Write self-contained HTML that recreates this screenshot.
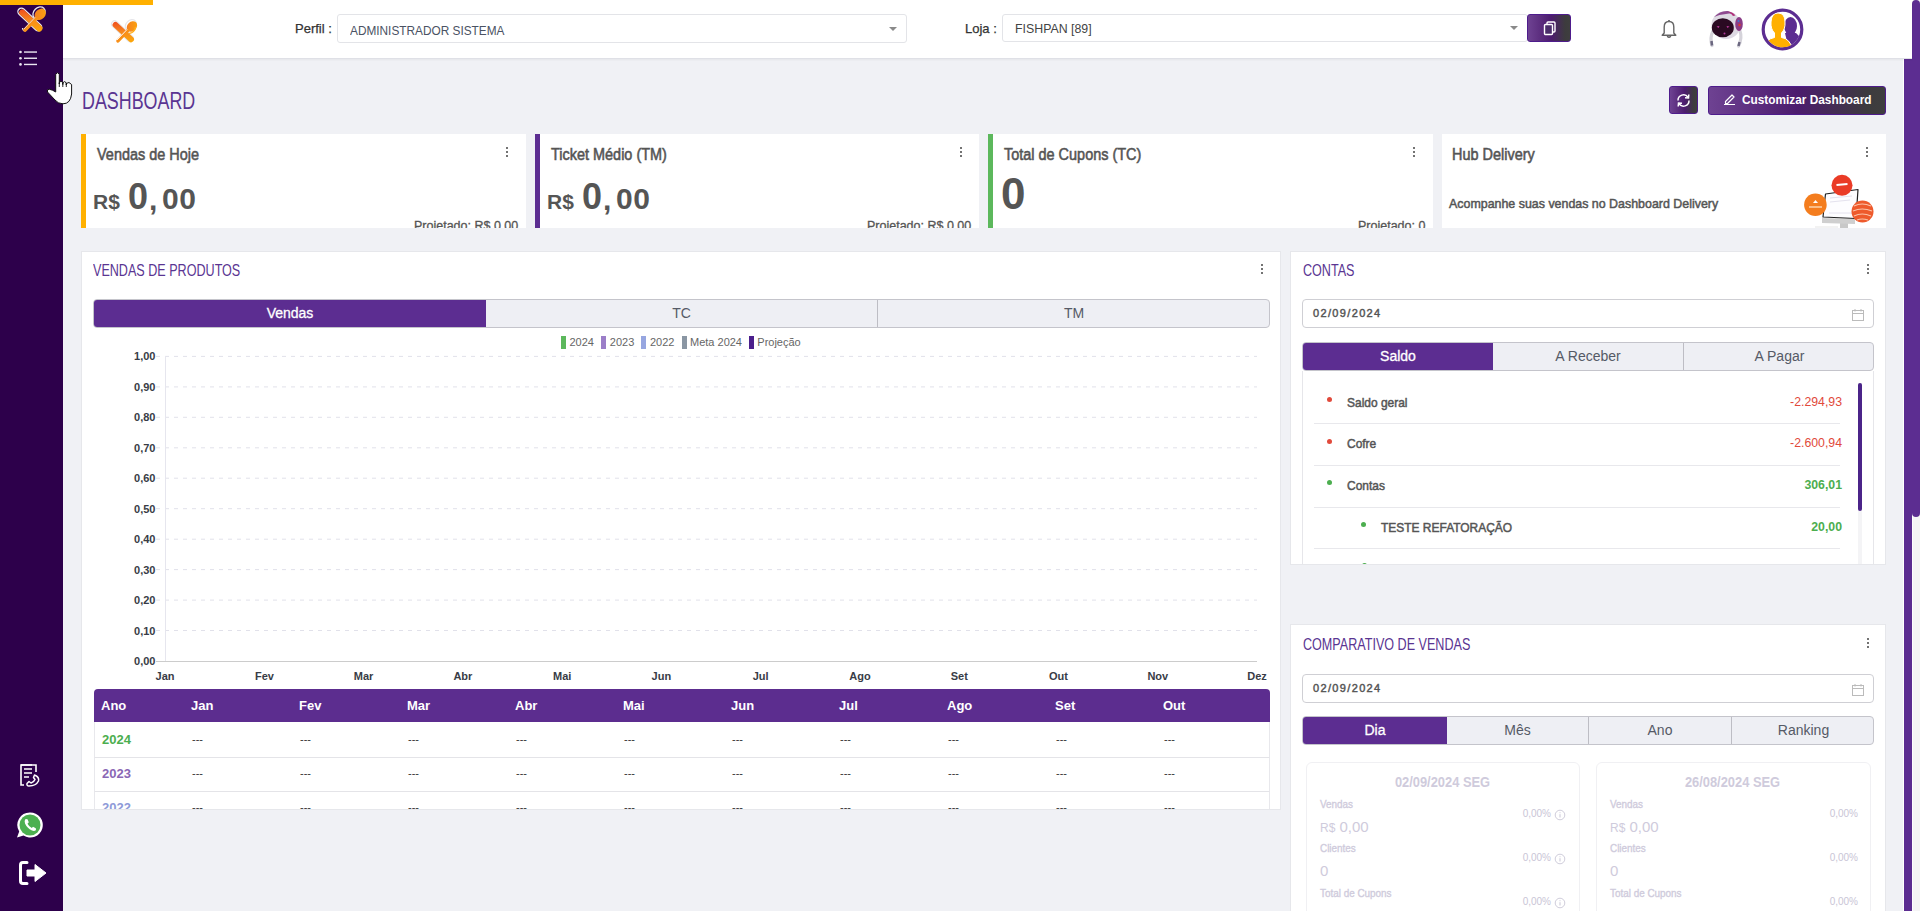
<!DOCTYPE html>
<html><head><meta charset="utf-8">
<style>
*{box-sizing:border-box;margin:0;padding:0}
html,body{width:1920px;height:911px;overflow:hidden}
body{background:#f0f1f5;font-family:"Liberation Sans",sans-serif;position:relative;color:#555}
.a{position:absolute}
.nw{white-space:nowrap}
#side{left:0;top:0;width:63px;height:911px;background:#2d004b}
#topbar{left:0;top:0;width:153px;height:5px;background:#ffb000;z-index:50}
#hdr{left:63px;top:0;width:1849px;height:59px;background:#fff;border-bottom:1px solid #dfe0e6;box-shadow:0 1px 2px rgba(0,0,0,.05);z-index:10}
#rstrip{left:1903px;top:58px;width:9px;height:853px;background:#5c2d91;border-left:1px solid #fff}
#sbtrack{left:1912px;top:0;width:8px;height:911px;background:#f5f5f5;border-left:1px solid #fff}
#sbthumb{left:1912px;top:0;width:8px;height:517px;background:#5c2d91;border-radius:4px}
.sel{background:#fff;border:1px solid #e3e4e8;border-radius:3px}
.caret{width:0;height:0;border-left:4px solid transparent;border-right:4px solid transparent;border-top:4.5px solid #8a8a8a}
.card{background:#fff}
.panel{background:#fff;border:1px solid #e6e7eb}
.dots{width:3px}
.dots i{display:block;width:2px;height:2px;background:#444;border-radius:1px;margin-bottom:2px}
.ttl{color:#5a3592;font-size:17px;line-height:1;transform-origin:0 0;transform:scaleX(.74)}
.tabs{border:1px solid #c4c4cb;border-radius:4px;background:#eeeff4;overflow:hidden}
.tab{position:absolute;top:0;height:100%;display:flex;align-items:center;justify-content:center;font-size:14px;color:#555a66;padding-bottom:1px}
.tab.on{background:#5c2d91;color:#fff;-webkit-text-stroke:.3px #fff}
.ct{font-size:17px;line-height:1;font-weight:normal;-webkit-text-stroke:.6px #555;color:#555;transform-origin:0 0;transform:scaleX(.85)}
.big{color:#555;font-weight:bold;line-height:1}
.rs{font-size:21px}
.b0{font-size:37px}
.b1{font-size:28px}
.c0{font-size:44px;line-height:1;font-weight:bold;color:#555}
.proj{font-size:12.5px;line-height:1;-webkit-text-stroke:.3px #555;color:#555}
.th{top:10px;font-size:13px;font-weight:bold;color:#fff;line-height:1}
.thead{background:#5c2d8f;border-radius:4px 4px 0 0}
.trow{width:1176px;height:35px;border-bottom:1px solid #e4e4e8;border-left:1px solid #e8e8ec;border-right:1px solid #e8e8ec}
.yr{top:11px;font-size:13px;font-weight:bold;line-height:1}
.dash{top:12px;font-size:11px;color:#333;line-height:1}
.leg{font-size:11px;color:#666;line-height:13px}
.sw{display:inline-block;width:5px;height:13px;vertical-align:top;margin:0 3px 0 4px}
.sel2{background:#fff;border:1px solid #cfcfd4;border-radius:4px}
.dt{font-size:11px;font-weight:normal;-webkit-text-stroke:.45px #555;color:#555;letter-spacing:1.35px;line-height:1}
.li{font-size:13px;font-weight:normal;-webkit-text-stroke:.5px #555;color:#555;line-height:1;transform:scaleX(.92);transform-origin:0 0}
.lv{font-size:12.3px;line-height:1}
.ccard{border:1px solid #f0f0f3;border-radius:6px}
.chd{text-align:center;font-size:14px;font-weight:bold;color:#cfcbdc;line-height:1;transform:scaleX(.92)}
.cl{font-size:11px;font-weight:normal;-webkit-text-stroke:.35px #cfcbdc;color:#cfcbdc;line-height:1;transform:scaleX(.9);transform-origin:0 0}
.cv{font-size:15px;color:#cfcbdc;line-height:1}
.cp{font-size:10px;color:#c9c5d6;line-height:1}
</style></head><body>
<div id="side" class="a">
 <svg class="a" style="left:12px;top:4px" width="40" height="32" viewBox="12 4 40 32">
  <defs><linearGradient id="lg2" gradientUnits="userSpaceOnUse" x1="18" y1="9" x2="42" y2="31"><stop offset="0" stop-color="#ec3320"/><stop offset=".5" stop-color="#f6861f"/><stop offset="1" stop-color="#ffb300"/></linearGradient></defs>
  <g fill="none" stroke="#e8e6ee" stroke-width="1.3">
   <rect x="14.8" y="16" width="30" height="7" rx="3.5" transform="rotate(43 29.8 19.5)"/>
   <ellipse cx="39" cy="13" rx="6.8" ry="5.3" transform="rotate(-45 39 13)"/>
   <path d="M22.5 28 Q23 31.5 26 30.5"/>
  </g>
  <rect x="16" y="17.3" width="29.5" height="6.3" rx="3.1" fill="url(#lg2)" transform="rotate(43 30.8 20.5)"/>
  <ellipse cx="40.2" cy="14.3" rx="6.3" ry="5" fill="url(#lg2)" transform="rotate(-45 40.2 14.3)"/>
  <path d="M36 18.5 L25 30" stroke="url(#lg2)" stroke-width="3.8" stroke-linecap="round"/>
  <path d="M35 17.5 L24 29" stroke="#e8e6ee" stroke-width="1" opacity=".8"/>
 </svg>
 <div class="a" style="left:63px;top:0;width:1px;height:911px;background:#f4f2f7"></div>
 <svg class="a" style="left:18px;top:50px" width="21" height="17" viewBox="0 0 21 17">
  <g fill="#ece8f2"><circle cx="2.5" cy="2" r="1.3"/><circle cx="2.5" cy="8.2" r="1.3"/><circle cx="2.5" cy="14.4" r="1.3"/>
  <rect x="6" y="1.35" width="13" height="1.4"/><rect x="6" y="7.55" width="13" height="1.4"/><rect x="6" y="13.75" width="13" height="1.4"/></g>
 </svg>
 <svg class="a" style="left:19px;top:763px" width="22" height="25" viewBox="0 0 22 25">
  <path d="M13 2 L2 2 L2 22 L5 22" fill="none" stroke="#fff" stroke-width="1.6"/>
  <path d="M2 2 L17 2 L17 9" fill="none" stroke="#fff" stroke-width="1.6"/>
  <path d="M5 6 L13 6 M5 10 L13 10 M5 14 L10 14" stroke="#fff" stroke-width="1.5"/>
  <path d="M15.5 12 Q20.5 14 19.5 18 Q17 23 10 23 Q7.5 23 8 20.5 L10 18.5 L12 20 Q15 19 16 16.5 L14.5 14.5 Z" fill="none" stroke="#fff" stroke-width="1.5" stroke-linejoin="round"/>
 </svg>
 <svg class="a" style="left:16px;top:811px" width="28" height="28" viewBox="0 0 28 28">
  <path d="M14 1.5 A12.5 12.5 0 1 1 7.5 24.5 L1 26.5 L3.2 20.5 A12.5 12.5 0 0 1 14 1.5 Z" fill="#fff"/>
  <circle cx="14" cy="14" r="10.5" fill="#4cb050"/>
  <path d="M9.5 8 Q8 9.5 9 12.5 Q11 17 16 19.5 Q18.5 20.5 20 19 L19.8 17.2 L17 15.8 L15.8 17 Q13 15.8 11.5 12.8 L12.8 11.3 L11.5 8.2 Z" fill="#fff"/>
 </svg>
 <svg class="a" style="left:18px;top:860px" width="30" height="26" viewBox="0 0 30 26">
  <path d="M9 2.5 L5 2.5 Q2.5 2.5 2.5 5 L2.5 21 Q2.5 23.5 5 23.5 L9 23.5" fill="none" stroke="#fff" stroke-width="3" stroke-linecap="round"/>
  <path d="M9 10 L17 10 L17 4.5 L28 13 L17 21.5 L17 16 L9 16 Z" fill="#fff" stroke="#fff" stroke-width="1" stroke-linejoin="round"/>
 </svg>
</div>
<div id="topbar" class="a"></div>
<div id="hdr" class="a">
 <svg class="a" style="left:43.4px;top:16.5px" width="36.8" height="29.4" viewBox="12 4 40 32">
  <defs><linearGradient id="lg1" gradientUnits="userSpaceOnUse" x1="18" y1="9" x2="42" y2="31"><stop offset="0" stop-color="#ec3320"/><stop offset=".5" stop-color="#f6861f"/><stop offset="1" stop-color="#ffb300"/></linearGradient></defs>
  <g fill="none" stroke="#e6e6ea" stroke-width="1.3">
   <rect x="14.8" y="16" width="30" height="7" rx="3.5" transform="rotate(43 29.8 19.5)"/>
   <ellipse cx="39" cy="13" rx="6.8" ry="5.3" transform="rotate(-45 39 13)"/>
  </g>
  <rect x="16" y="17.3" width="29.5" height="6.3" rx="3.1" fill="url(#lg1)" transform="rotate(43 30.8 20.5)"/>
  <ellipse cx="40.2" cy="14.3" rx="6.3" ry="5" fill="url(#lg1)" transform="rotate(-45 40.2 14.3)"/>
  <path d="M36 18.5 L25 30" stroke="url(#lg1)" stroke-width="3.8" stroke-linecap="round"/>
  <path d="M44 15 Q44 19 40 21 L37 22" stroke="#ffae1a" stroke-width="1.5" fill="none"/>
  <path d="M35 17.5 L24 29" stroke="#fff" stroke-width="1"/>
 </svg>
 <div class="a nw" style="left:232px;top:21px;font-size:13px;color:#333;-webkit-text-stroke:.25px #333">Perfil :</div>
 <div class="a sel" style="left:274px;top:14px;width:570px;height:29px">
   <div class="a nw" style="left:12px;top:8px;font-size:13px;color:#4a5263;transform:scaleX(.91);transform-origin:0 0">ADMINISTRADOR SISTEMA</div>
   <div class="a caret" style="left:551px;top:11.5px"></div>
 </div>
 <div class="a nw" style="left:902px;top:21px;font-size:13px;color:#333;-webkit-text-stroke:.25px #333">Loja :</div>
 <div class="a sel" style="left:939px;top:14px;width:526px;height:28px">
   <div class="a nw" style="left:12px;top:6px;font-size:13px;color:#444;transform:scaleX(.95);transform-origin:0 0">FISHPAN [89]</div>
   <div class="a caret" style="left:507px;top:11px"></div>
 </div>
 <div class="a" style="left:1464px;top:14px;width:44px;height:28px;border-radius:3px;border:1px solid #4e1c8c;background:linear-gradient(90deg,#6e4292,#4c1c6e 55%,#3d3b3e 88%,#3e3e3e)">
   <svg class="a" style="left:14.5px;top:5.5px" width="14" height="15" viewBox="0 0 14 15"><rect x="4" y="1" width="8" height="10" rx="1" fill="none" stroke="#fff" stroke-width="1.4"/><rect x="1.5" y="3.5" width="8" height="10" rx="1" fill="#4a2d6a" stroke="#fff" stroke-width="1.4"/></svg>
 </div>
 <svg class="a" style="left:1598px;top:19px" width="16" height="20" viewBox="0 0 16 20"><path d="M8 2.5 C4.5 2.5 3.2 5 3.2 8 L3.2 14 L1.2 16.3 L14.8 16.3 L12.8 14 L12.8 8 C12.8 5 11.5 2.5 8 2.5 Z" fill="none" stroke="#666" stroke-width="1.4" stroke-linejoin="round"/><path d="M8 1 L8 2.5" stroke="#666" stroke-width="1.6"/><path d="M6.2 17 Q8 19.5 9.8 17" fill="none" stroke="#666" stroke-width="1.4"/></svg>
 <svg class="a" style="left:1641px;top:6px" width="44" height="44" viewBox="0 0 44 44">
   <path d="M9 25 Q5.5 32 8 39.5" stroke="#d5d3da" stroke-width="3.2" fill="none" stroke-linecap="round"/><path d="M7.5 35 L8 39.5" stroke="#6b6780" stroke-width="2.5"/>
   <path d="M36 25 Q38.5 32 34.5 40" stroke="#d5d3da" stroke-width="3.2" fill="none" stroke-linecap="round"/><path d="M35.5 36 L34.5 40" stroke="#6b6780" stroke-width="2.5"/>
   <ellipse cx="22" cy="19" rx="14.5" ry="14" fill="#dedae3"/>
   <path d="M10 11 Q16 4.5 24 5 Q27 6 30 8.5 Q26 7 22 8 Q15 8.5 10 11 Z" fill="#8e4a90"/>
   <path d="M24 5.5 Q29 6 31.5 9.5 L29 10 Q27 7.5 24 5.5 Z" fill="#b0307a"/>
   <ellipse cx="35" cy="18" rx="3.8" ry="7" fill="#8a3c86"/><circle cx="35.5" cy="19" r="1.2" fill="#e03a2a"/><circle cx="34.5" cy="15" r="1" fill="#3a7ad0"/>
   <ellipse cx="18.8" cy="21.8" rx="11" ry="9.5" fill="#2a0a22"/>
   <path d="M12.5 20.5 L15.5 20 L14.5 22 Z M22.5 20 L25.5 20.5 L23.5 22 Z" fill="#c03aa0"/>
   <circle cx="20.5" cy="27.5" r="1" fill="#b03a9a"/>
 </svg>
 <svg class="a" style="left:1698px;top:8px" width="43" height="43" viewBox="0 0 43 43">
   <defs><clipPath id="cc"><circle cx="21.5" cy="21.5" r="17.8"/></clipPath></defs>
   <circle cx="21.5" cy="21.5" r="19.3" fill="#fff" stroke="#5c2d91" stroke-width="3.2"/>
   <g clip-path="url(#cc)">
   <ellipse cx="29.5" cy="18" rx="6.5" ry="9" fill="#5c2d91"/>
   <path d="M24 25 L35 25 Q41 30 43 40 L28 42 Z" fill="#5c2d91"/>
   <path d="M2 42 Q4 31 13.5 29.5 L13.5 25 Q9.5 21 10 14 Q10.5 5 17 5 Q24 5 24 14 Q24.5 21 20.5 25 L20.5 29.5 Q29 30.5 32 42 Z" fill="#ffb000" stroke="#fff" stroke-width="1"/>
   </g>
 </svg>
</div>
<div id="rstrip" class="a"></div>
<div id="sbtrack" class="a"></div>
<div id="sbthumb" class="a"></div>

<!-- title -->
<div class="a ttl nw" id="t_dash" style="left:82px;top:89px;font-size:24px;transform:scaleX(.745)">DASHBOARD</div>
<div class="a" style="left:1669px;top:86px;width:29px;height:28px;border-radius:3px;border:1px solid #4e1c8c;background:linear-gradient(90deg,#6e4292,#4c1c6e 55%,#3d3b3e 88%,#3e3e3e)">
 <svg class="a" style="left:5px;top:4.5px" width="17" height="17" viewBox="0 0 17 17"><path d="M14 8.5 A5.5 5.5 0 0 1 4 11.8" fill="none" stroke="#fff" stroke-width="1.5"/><path d="M3 8.5 A5.5 5.5 0 0 1 13 5.2" fill="none" stroke="#fff" stroke-width="1.5"/><path d="M13.8 2.5 L13.5 6 L10 5.7" fill="none" stroke="#fff" stroke-width="1.5"/><path d="M3.2 14.5 L3.5 11 L7 11.3" fill="none" stroke="#fff" stroke-width="1.5"/></svg>
</div>
<div class="a" style="left:1708px;top:86px;width:178px;height:29px;border-radius:3px;border:1px solid #4e1c8c;background:linear-gradient(90deg,#6e4292,#4c1c6e 50%,#3d3b3e 90%,#3e3e3e)">
 <svg class="a" style="left:14px;top:5px" width="13" height="13" viewBox="0 0 13 13"><path d="M2.5 9.5 L2.5 11.5 L4.5 11.5 L11 5 L9 3 Z" fill="none" stroke="#fff" stroke-width="1.2" stroke-linejoin="round"/><path d="M1 12.5 L12 12.5" stroke="#fff" stroke-width="1"/></svg>
 <div class="a nw" id="t_cust" style="left:33px;top:4.5px;font-size:13px;font-weight:bold;color:#fff;transform:scaleX(.91);transform-origin:0 0">Customizar Dashboard</div>
</div>

<!-- cards -->
<div class="a card" style="left:81px;top:134px;width:445px;height:94px;border-left:5px solid #ffb000;overflow:hidden">
 <div class="a nw ct" id="c1t" style="left:11px;top:11.5px">Vendas de Hoje</div>
 <div class="a dots" style="left:420px;top:13px"><i></i><i></i><i></i></div>
 <div class="a nw big rs" style="left:7px;top:57px">R$</div><div class="a nw big b0" style="left:42px;top:45px;font-size:36px">0</div><div class="a nw big b1" style="left:63px;top:51px;font-size:30px">,</div><div class="a nw big b1" style="left:76px;top:50px;font-size:30px;letter-spacing:.5px">00</div>
 <div class="a nw proj" style="left:328px;top:86px">Projetado: R$ 0,00</div>
</div>
<div class="a card" style="left:535px;top:134px;width:444px;height:94px;border-left:5px solid #5c2d91;overflow:hidden">
 <div class="a nw ct" id="c2t" style="left:11px;top:11.5px">Ticket Médio (TM)</div>
 <div class="a dots" style="left:420px;top:13px"><i></i><i></i><i></i></div>
 <div class="a nw big rs" style="left:7px;top:57px">R$</div><div class="a nw big b0" style="left:42px;top:45px;font-size:36px">0</div><div class="a nw big b1" style="left:63px;top:51px;font-size:30px">,</div><div class="a nw big b1" style="left:76px;top:50px;font-size:30px;letter-spacing:.5px">00</div>
 <div class="a nw proj" style="left:327px;top:86px">Projetado: R$ 0,00</div>
</div>
<div class="a card" style="left:988px;top:134px;width:445px;height:94px;border-left:5px solid #5cb85c;overflow:hidden">
 <div class="a nw ct" id="c3t" style="left:11px;top:11.5px">Total de Cupons (TC)</div>
 <div class="a dots" style="left:420px;top:13px"><i></i><i></i><i></i></div>
 <div class="a nw c0" style="left:8px;top:38px">0</div>
 <div class="a nw proj" style="left:365px;top:86px">Projetado: 0</div>
</div>
<div class="a card" style="left:1442px;top:134px;width:444px;height:94px;overflow:hidden">
 <div class="a nw ct" id="c4t" style="left:10px;top:11.5px">Hub Delivery</div>
 <div class="a dots" style="left:424px;top:13px"><i></i><i></i><i></i></div>
 <div class="a nw" id="c4s" style="left:7px;top:63px;font-size:13px;line-height:1;font-weight:normal;-webkit-text-stroke:.5px #555;color:#555;transform:scaleX(.955);transform-origin:0 0">Acompanhe suas vendas no Dashboard Delivery</div>
 <svg class="a" style="left:360px;top:38px" width="75" height="56" viewBox="0 0 75 56">
  <path d="M13.0 55.0 L36.0 55.0" stroke="#eee" stroke-width="1.5"/>
  <path d="M38.0 51.0 L46.0 51.0 L46.0 56.0 L38.0 56.0 Z" fill="#c8c8c8"/>
  <path d="M20.0 46.0 L53.0 47.0 L53.0 52.0 L20.0 51.0 Z" fill="#cfcfcf"/>
  <path d="M23.5 22.0 L56.0 17.5 L54.0 46.5 L21.0 45.0 Z" fill="#fdfdff" stroke="#222" stroke-width="1.2" stroke-linejoin="round"/>
  <path d="M28.0 26.0 L50.0 24.0 M28.0 30.0 L48.0 28.0 M27.0 41.0 L50.0 41.0" stroke="#e4e2ee" stroke-width="1"/>
  <circle cx="40" cy="13.300000000000011" r="10.5" fill="#ea3b26"/>
  <path d="M34.5 13.0 L45.5 12.0" stroke="#fff" stroke-width="2.2"/>
  <circle cx="13.400000000000091" cy="32.69999999999999" r="11.3" fill="#f47d1e"/>
  <path d="M7.0 35.0 L20.0 35.0" stroke="#ffe0c0" stroke-width="1.3"/><path d="M11.0 31.0 L13.5 28.0 L16.0 31.0 Z" fill="#fff"/>
  <circle cx="60.5" cy="39.5" r="11" fill="#ee5a2c"/>
  <path d="M52.0 34.0 Q60.0 30.0 69.0 34.0 M51.0 39.0 Q60.0 35.0 70.0 39.0 M52.0 44.0 Q60.0 40.0 69.0 44.0 M55.0 48.0 Q60.0 46.0 66.0 48.0" stroke="#fbc3a8" stroke-width="1.1" fill="none"/>
 </svg>
</div>
<!-- panels -->
<div class="a panel" style="left:81px;top:251px;width:1200px;height:559px;overflow:hidden">
 <div class="a nw ttl" id="t_vp" style="left:11px;top:10px">VENDAS DE PRODUTOS</div>
 <div class="a dots" style="left:1179px;top:12px"><i></i><i></i><i></i></div>
 <div class="a tabs" style="left:11px;top:47px;width:1177px;height:29px">
  <div class="tab on" style="left:0;width:392px">Vendas</div>
  <div class="tab" style="left:392px;width:392px;border-right:1px solid #bdbdc4">TC</div>
  <div class="tab" style="left:784px;width:392px">TM</div>
 </div>
 <div class="a" style="left:478.9px;top:83.5px;width:5px;height:13px;background:#5cb85c"></div><div class="a nw leg" style="left:487.4px;top:84px">2024</div><div class="a" style="left:519.3px;top:83.5px;width:5px;height:13px;background:#9b7ec8"></div><div class="a nw leg" style="left:527.8px;top:84px">2023</div><div class="a" style="left:559.4px;top:83.5px;width:5px;height:13px;background:#97a6e0"></div><div class="a nw leg" style="left:567.9px;top:84px">2022</div><div class="a" style="left:599.5px;top:83.5px;width:5px;height:13px;background:#8a96a3"></div><div class="a nw leg" style="left:608.0px;top:84px">Meta 2024</div><div class="a" style="left:666.8px;top:83.5px;width:5px;height:13px;background:#4b1f8c"></div><div class="a nw leg" style="left:675.3px;top:84px">Projeção</div>
 <svg class="a" style="left:0;top:0" width="1199" height="558">
<line x1="74" y1="104.4" x2="1175" y2="104.4" stroke="#e1e1ea" stroke-width="1" stroke-dasharray="4 5"/>
<text x="73.5" y="108.4" text-anchor="end" font-size="11" font-weight="bold" fill="#383c46">1,00</text>
<line x1="74" y1="134.9" x2="1175" y2="134.9" stroke="#e1e1ea" stroke-width="1" stroke-dasharray="4 5"/>
<text x="73.5" y="138.9" text-anchor="end" font-size="11" font-weight="bold" fill="#383c46">0,90</text>
<line x1="74" y1="165.3" x2="1175" y2="165.3" stroke="#e1e1ea" stroke-width="1" stroke-dasharray="4 5"/>
<text x="73.5" y="169.3" text-anchor="end" font-size="11" font-weight="bold" fill="#383c46">0,80</text>
<line x1="74" y1="195.8" x2="1175" y2="195.8" stroke="#e1e1ea" stroke-width="1" stroke-dasharray="4 5"/>
<text x="73.5" y="199.8" text-anchor="end" font-size="11" font-weight="bold" fill="#383c46">0,70</text>
<line x1="74" y1="226.2" x2="1175" y2="226.2" stroke="#e1e1ea" stroke-width="1" stroke-dasharray="4 5"/>
<text x="73.5" y="230.2" text-anchor="end" font-size="11" font-weight="bold" fill="#383c46">0,60</text>
<line x1="74" y1="256.7" x2="1175" y2="256.7" stroke="#e1e1ea" stroke-width="1" stroke-dasharray="4 5"/>
<text x="73.5" y="260.7" text-anchor="end" font-size="11" font-weight="bold" fill="#383c46">0,50</text>
<line x1="74" y1="287.2" x2="1175" y2="287.2" stroke="#e1e1ea" stroke-width="1" stroke-dasharray="4 5"/>
<text x="73.5" y="291.2" text-anchor="end" font-size="11" font-weight="bold" fill="#383c46">0,40</text>
<line x1="74" y1="317.6" x2="1175" y2="317.6" stroke="#e1e1ea" stroke-width="1" stroke-dasharray="4 5"/>
<text x="73.5" y="321.6" text-anchor="end" font-size="11" font-weight="bold" fill="#383c46">0,30</text>
<line x1="74" y1="348.1" x2="1175" y2="348.1" stroke="#e1e1ea" stroke-width="1" stroke-dasharray="4 5"/>
<text x="73.5" y="352.1" text-anchor="end" font-size="11" font-weight="bold" fill="#383c46">0,20</text>
<line x1="74" y1="378.5" x2="1175" y2="378.5" stroke="#e1e1ea" stroke-width="1" stroke-dasharray="4 5"/>
<text x="73.5" y="382.5" text-anchor="end" font-size="11" font-weight="bold" fill="#383c46">0,10</text>
<text x="73.5" y="413.0" text-anchor="end" font-size="11" font-weight="bold" fill="#383c46">0,00</text>
<line x1="83.5" y1="104" x2="83.5" y2="409" stroke="#e6e6ee" stroke-width="1"/>
<line x1="74" y1="409.5" x2="1175" y2="409.5" stroke="#ccc" stroke-width="1"/>
<text x="83.1" y="428" text-anchor="middle" font-size="11" font-weight="bold" fill="#383c46">Jan</text>
<text x="182.4" y="428" text-anchor="middle" font-size="11" font-weight="bold" fill="#383c46">Fev</text>
<text x="281.6" y="428" text-anchor="middle" font-size="11" font-weight="bold" fill="#383c46">Mar</text>
<text x="380.9" y="428" text-anchor="middle" font-size="11" font-weight="bold" fill="#383c46">Abr</text>
<text x="480.2" y="428" text-anchor="middle" font-size="11" font-weight="bold" fill="#383c46">Mai</text>
<text x="579.4" y="428" text-anchor="middle" font-size="11" font-weight="bold" fill="#383c46">Jun</text>
<text x="678.7" y="428" text-anchor="middle" font-size="11" font-weight="bold" fill="#383c46">Jul</text>
<text x="778.0" y="428" text-anchor="middle" font-size="11" font-weight="bold" fill="#383c46">Ago</text>
<text x="877.3" y="428" text-anchor="middle" font-size="11" font-weight="bold" fill="#383c46">Set</text>
<text x="976.5" y="428" text-anchor="middle" font-size="11" font-weight="bold" fill="#383c46">Out</text>
<text x="1075.8" y="428" text-anchor="middle" font-size="11" font-weight="bold" fill="#383c46">Nov</text>
<text x="1175.1" y="428" text-anchor="middle" font-size="11" font-weight="bold" fill="#383c46">Dez</text>
</svg>
 <div class="a" style="left:12px;top:437px;width:1176px;height:130px">
  <div class="a thead" style="left:0;top:0;width:1176px;height:33px"><div class="a nw th" style="left:7px">Ano</div><div class="a nw th" style="left:97px">Jan</div><div class="a nw th" style="left:205px">Fev</div><div class="a nw th" style="left:313px">Mar</div><div class="a nw th" style="left:421px">Abr</div><div class="a nw th" style="left:529px">Mai</div><div class="a nw th" style="left:637px">Jun</div><div class="a nw th" style="left:745px">Jul</div><div class="a nw th" style="left:853px">Ago</div><div class="a nw th" style="left:961px">Set</div><div class="a nw th" style="left:1069px">Out</div></div>
  <div class="a trow" style="left:0;top:33px;height:36px"><div class="a nw yr" style="left:7px;top:11px;color:#4cae4f">2024</div><div class="a nw dash" style="left:97px;top:12px">---</div><div class="a nw dash" style="left:205px;top:12px">---</div><div class="a nw dash" style="left:313px;top:12px">---</div><div class="a nw dash" style="left:421px;top:12px">---</div><div class="a nw dash" style="left:529px;top:12px">---</div><div class="a nw dash" style="left:637px;top:12px">---</div><div class="a nw dash" style="left:745px;top:12px">---</div><div class="a nw dash" style="left:853px;top:12px">---</div><div class="a nw dash" style="left:961px;top:12px">---</div><div class="a nw dash" style="left:1069px;top:12px">---</div></div><div class="a trow" style="left:0;top:69px;height:34px"><div class="a nw yr" style="left:7px;top:9px;color:#8a67b5">2023</div><div class="a nw dash" style="left:97px;top:10px">---</div><div class="a nw dash" style="left:205px;top:10px">---</div><div class="a nw dash" style="left:313px;top:10px">---</div><div class="a nw dash" style="left:421px;top:10px">---</div><div class="a nw dash" style="left:529px;top:10px">---</div><div class="a nw dash" style="left:637px;top:10px">---</div><div class="a nw dash" style="left:745px;top:10px">---</div><div class="a nw dash" style="left:853px;top:10px">---</div><div class="a nw dash" style="left:961px;top:10px">---</div><div class="a nw dash" style="left:1069px;top:10px">---</div></div><div class="a trow" style="left:0;top:103px;height:34px"><div class="a nw yr" style="left:7px;top:8.5px;color:#8e9ad8">2022</div><div class="a nw dash" style="left:97px;top:10px">---</div><div class="a nw dash" style="left:205px;top:10px">---</div><div class="a nw dash" style="left:313px;top:10px">---</div><div class="a nw dash" style="left:421px;top:10px">---</div><div class="a nw dash" style="left:529px;top:10px">---</div><div class="a nw dash" style="left:637px;top:10px">---</div><div class="a nw dash" style="left:745px;top:10px">---</div><div class="a nw dash" style="left:853px;top:10px">---</div><div class="a nw dash" style="left:961px;top:10px">---</div><div class="a nw dash" style="left:1069px;top:10px">---</div></div>
 </div>
</div>
<div class="a panel" style="left:1290px;top:251px;width:596px;height:314px;overflow:hidden"><div class="a" style="left:1px;top:0;width:594px;height:100%">
 <div class="a nw ttl" id="t_ct" style="left:11px;top:10px">CONTAS</div>
 <div class="a dots" style="left:575px;top:12px"><i></i><i></i><i></i></div>
 <div class="a sel2" style="left:10px;top:47px;width:572px;height:29px">
  <div class="a nw dt" style="left:10px;top:8px">02/09/2024</div>
  <svg class="a" style="left:549px;top:9px" width="12" height="12" viewBox="0 0 12 12"><rect x="0.5" y="1.5" width="11" height="10" fill="none" stroke="#bbb"/><path d="M0.5 4.5 L11.5 4.5 M3 0 L3 2.5 M9 0 L9 2.5" stroke="#bbb"/></svg>
 </div>
 <div class="a tabs" style="left:10px;top:90px;width:572px;height:29px">
  <div class="tab on" style="left:0;width:190px">Saldo</div>
  <div class="tab" style="left:190px;width:191px;border-right:1px solid #bdbdc4">A Receber</div>
  <div class="tab" style="left:381px;width:191px">A Pagar</div>
 </div>
 <div class="a" style="left:10px;top:119px;width:572px;height:260px;border:1px solid #e6e6ea;border-top:none"></div>
 <div class="a" style="left:566px;top:131px;width:4px;height:200px;background:#f4f4f6"></div>
 <div class="a" style="left:566px;top:131px;width:4px;height:128px;border-radius:2px;background:#4b2489"></div>
 <div class="a" style="left:35px;top:145.0px;width:5px;height:5px;border-radius:50%;background:#e14a3b"></div><div class="a nw li" style="left:55px;top:143.5px">Saldo geral</div><div class="a nw lv" style="right:44px;top:143.5px;color:#e14a3b;font-weight:normal">-2.294,93</div><div class="a" style="left:22px;top:171.3px;width:526px;height:1px;background:#e8e8ec"></div><div class="a" style="left:35px;top:186.7px;width:5px;height:5px;border-radius:50%;background:#e14a3b"></div><div class="a nw li" style="left:55px;top:185.2px">Cofre</div><div class="a nw lv" style="right:44px;top:185.2px;color:#e14a3b;font-weight:normal">-2.600,94</div><div class="a" style="left:22px;top:213.0px;width:526px;height:1px;background:#e8e8ec"></div><div class="a" style="left:35px;top:228.4px;width:5px;height:5px;border-radius:50%;background:#4cae4f"></div><div class="a nw li" style="left:55px;top:226.9px">Contas</div><div class="a nw lv" style="right:44px;top:226.9px;color:#4cae4f;font-weight:bold">306,01</div><div class="a" style="left:22px;top:254.7px;width:526px;height:1px;background:#e8e8ec"></div><div class="a" style="left:69px;top:270.1px;width:5px;height:5px;border-radius:50%;background:#4cae4f"></div><div class="a nw li" style="left:89px;top:268.6px">TESTE REFATORAÇÃO</div><div class="a nw lv" style="right:44px;top:268.6px;color:#4cae4f;font-weight:bold">20,00</div><div class="a" style="left:22px;top:296.4px;width:526px;height:1px;background:#e8e8ec"></div><div class="a" style="left:70px;top:311px;width:5px;height:5px;border-radius:50%;background:#4cae4f"></div>
</div></div>
<div class="a panel" style="left:1290px;top:624px;width:596px;height:300px;overflow:hidden"><div class="a" style="left:1px;top:0;width:594px;height:100%">
 <div class="a nw ttl" id="t_cv" style="left:11px;top:11px">COMPARATIVO DE VENDAS</div>
 <div class="a dots" style="left:575px;top:13px"><i></i><i></i><i></i></div>
 <div class="a sel2" style="left:10px;top:49px;width:572px;height:29px">
  <div class="a nw dt" style="left:10px;top:8px">02/09/2024</div>
  <svg class="a" style="left:549px;top:9px" width="12" height="12" viewBox="0 0 12 12"><rect x="0.5" y="1.5" width="11" height="10" fill="none" stroke="#bbb"/><path d="M0.5 4.5 L11.5 4.5 M3 0 L3 2.5 M9 0 L9 2.5" stroke="#bbb"/></svg>
 </div>
 <div class="a tabs" style="left:10px;top:91px;width:572px;height:29px">
  <div class="tab on" style="left:0;width:144px">Dia</div>
  <div class="tab" style="left:144px;width:142px;border-right:1px solid #bdbdc4">Mês</div>
  <div class="tab" style="left:286px;width:143px;border-right:1px solid #bdbdc4">Ano</div>
  <div class="tab" style="left:429px;width:143px">Ranking</div>
 </div>
 <div class="a ccard" style="left:14px;top:137px;width:274px;height:200px">
  <div class="a nw chd" style="left:0;width:271px;top:12px">02/09/2024 SEG</div>
  <div class="a nw cl" style="left:13px;top:35.6px">Vendas</div><div class="a nw cv" style="left:13px;top:55.6px"><span style="font-size:12px">R$</span> 0,00</div><div class="a nw cp" style="right:28px;top:45.9px">0,00%</div><svg class="a" style="right:13px;top:45.9px" width="12" height="12" viewBox="0 0 12 12"><circle cx="6" cy="6" r="4.8" fill="none" stroke="#c9c6d6" stroke-width=".9"/><path d="M6 5.2 L6 8.5 M6 3.3 L6 4.2" stroke="#c9c6d6" stroke-width="1"/></svg><div class="a nw cl" style="left:13px;top:80.1px">Clientes</div><div class="a nw cv" style="left:13px;top:100.1px">0</div><div class="a nw cp" style="right:28px;top:89.9px">0,00%</div><svg class="a" style="right:13px;top:89.9px" width="12" height="12" viewBox="0 0 12 12"><circle cx="6" cy="6" r="4.8" fill="none" stroke="#c9c6d6" stroke-width=".9"/><path d="M6 5.2 L6 8.5 M6 3.3 L6 4.2" stroke="#c9c6d6" stroke-width="1"/></svg><div class="a nw cl" style="left:13px;top:124.6px">Total de Cupons</div><div class="a nw cv" style="left:13px;top:144.6px">0</div><div class="a nw cp" style="right:28px;top:133.9px">0,00%</div><svg class="a" style="right:13px;top:133.9px" width="12" height="12" viewBox="0 0 12 12"><circle cx="6" cy="6" r="4.8" fill="none" stroke="#c9c6d6" stroke-width=".9"/><path d="M6 5.2 L6 8.5 M6 3.3 L6 4.2" stroke="#c9c6d6" stroke-width="1"/></svg>
 </div>
 <div class="a ccard" style="left:304px;top:137px;width:275px;height:200px">
  <div class="a nw chd" style="left:0;width:271px;top:12px">26/08/2024 SEG</div>
  <div class="a nw cl" style="left:13px;top:35.6px">Vendas</div><div class="a nw cv" style="left:13px;top:55.6px"><span style="font-size:12px">R$</span> 0,00</div><div class="a nw cp" style="right:12px;top:45.9px">0,00%</div><div class="a nw cl" style="left:13px;top:80.1px">Clientes</div><div class="a nw cv" style="left:13px;top:100.1px">0</div><div class="a nw cp" style="right:12px;top:89.9px">0,00%</div><div class="a nw cl" style="left:13px;top:124.6px">Total de Cupons</div><div class="a nw cv" style="left:13px;top:144.6px">0</div><div class="a nw cp" style="right:12px;top:133.9px">0,00%</div>
 </div>
</div></div>
<svg class="a" style="left:46px;top:71px;z-index:60" width="28" height="35" viewBox="0 0 28 35">
 <path d="M9.7 20.5 L9.7 3.2 Q11.5 0.3 13.3 3.2 L13.3 13 L13.3 11.5 Q15 9 16.8 11.5 L16.8 13.5 L16.8 11.8 Q18.5 9.5 20.3 11.8 L20.3 14 L20.3 12.5 Q23 10 25.6 13.5 L25.6 23 Q24.5 32.8 17 32.8 Q12 32.8 9 29 L1.5 21 Q0.5 18 3.5 18.3 Q6.5 18.8 9.7 21 Z" fill="#fff" stroke="#111" stroke-width="1" stroke-linejoin="round"/>
 <path d="M13.3 11.8 L13.3 16 M16.8 11.8 L16.8 16 M20.3 12.3 L20.3 16" stroke="#111" stroke-width=".9"/>
</svg>
</body></html>
